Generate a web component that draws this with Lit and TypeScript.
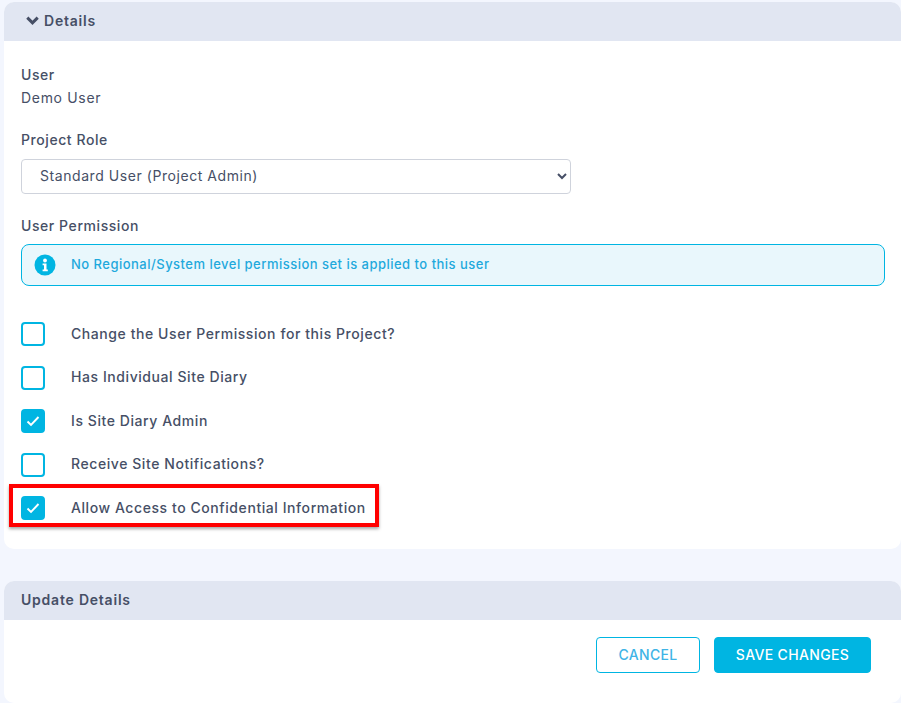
import { LitElement, html, css, svg } from "lit";
import { customElement } from "lit/decorators.js";

const rows = [
  { label: "Change the User Permission for this Project?", checked: false },
  { label: "Has Individual Site Diary", checked: false },
  { label: "Is Site Diary Admin", checked: true },
  { label: "Receive Site Notifications?", checked: false },
  { label: "Allow Access to Confidential Information", checked: true, marked: true },
];

@customElement("app-root")
export class AppRoot extends LitElement {
  static styles = css`
    :host {
      display: block;
      width: 901px;
      height: 703px;
      overflow: hidden;
      background: #f3f6fe;
      font-family: Inter, "Noto Sans", sans-serif;
      font-size: 14px;
      color: #464f66;
      letter-spacing: 0.57px;
    }
    .page { padding: 2px 0 0 4px; display: flex; flex-direction: column; gap: 32px; }
    .card { background: #fff; border-radius: 10px; overflow: hidden; }
    .head {
      height: 39px;
      box-sizing: border-box;
      padding-bottom: 2px;
      background: #e1e6f2;
      display: flex;
      align-items: center;
      padding-left: 17px;
      font-weight: 600;
      font-size: 14px;
      letter-spacing: 0.78px;
      color: #464f66;
    }
    .details .head { padding-left: 22px; gap: 5px; }
    .body { height: 508px; padding: 0 17px; box-sizing: border-box; position: relative; }
    .label { font-weight: 500; line-height: 20px; }
    .user { padding-top: 24px; }
    .value { line-height: 20px; margin-top: 3px; letter-spacing: 0.68px; }
    .role { margin-top: 22px; }
    select {
      display: block;
      width: 550px;
      height: 35px;
      margin-top: 9px;
      padding: 0 14px 2px;
      box-sizing: border-box;
      border: 1px solid #cfd3dc;
      border-radius: 4px;
      background-color: #fff;
      font: inherit;
      letter-spacing: 0.56px;
      color: #464f66;
    }
    .perm { margin-top: 22px; }
    .alert {
      margin-top: 8px;
      width: 864px;
      height: 42px;
      box-sizing: border-box;
      border: 1px solid #00b5e2;
      border-radius: 8px;
      background: #e9f7fc;
      display: flex;
      align-items: center;
      padding: 0 0 2px 12px;
      gap: 15px;
      color: #1fa9dc;
      font-size: 13px;
      font-weight: 500;
      letter-spacing: 0.48px;
    }
    .alert svg { display: block; margin-top: 2px; }
    .checks { margin-top: 36px; display: flex; flex-direction: column; }
    .row { height: 24px; margin-bottom: 19.5px; display: flex; align-items: center; gap: 26px; font-weight: 500; position: relative; }
    .row span:nth-child(2) { position: relative; top: -1px; }
    .box {
      width: 24px;
      height: 24px;
      box-sizing: border-box;
      border: 2px solid #00b5e2;
      border-radius: 4px;
      flex: none;
      display: flex;
      align-items: center;
      justify-content: center;
      background: #fff;
    }
    .box.on { background: #00b5e2; }
    .mark {
      position: absolute;
      left: -12px;
      top: -12px;
      width: 370px;
      height: 43px;
      box-sizing: border-box;
      border: 4px solid #ff0000;
      box-shadow: 0 2px 3px rgba(0,0,0,.35);
      pointer-events: none;
    }
    .update .head { padding-left: 17px; }
    .foot {
      height: 83px;
      box-sizing: border-box;
      padding: 17px 30px 0 0;
      display: flex;
      justify-content: flex-end;
      align-items: flex-start;
      gap: 14px;
    }
    .btn {
      height: 36px;
      box-sizing: border-box;
      padding-bottom: 2px;
      border-radius: 4px;
      display: flex;
      align-items: center;
      justify-content: center;
      font-size: 14px;
      font-weight: 500;
      letter-spacing: 0.35px;
      border: 1px solid #00b5e2;
      font-family: inherit;
    }
    .cancel { width: 104px; background: #fff; color: #3fb4e6; }
    .save { width: 157px; background: #00b5e2; color: #fff; }
  `;

  private check() {
    return html`<svg width="14" height="12" viewBox="0 0 14 12">${svg`<path d="M1.5 6.5 5 10 12.5 2" fill="none" stroke="#fff" stroke-width="1.9"/>`}</svg>`;
  }

  render() {
    return html`<div class="page">
      <section class="card details">
        <div class="head">
          <svg width="13" height="9" viewBox="0 0 13 9"><path d="M1.3 1.6 6.5 6.8 11.7 1.6" fill="none" stroke="#464f66" stroke-width="3"/></svg>
          <span>Details</span>
        </div>
        <div class="body">
          <div class="user label">User</div>
          <div class="value">Demo User</div>
          <div class="role label">Project Role</div>
          <select><option>Standard User (Project Admin)</option></select>
          <div class="perm label">User Permission</div>
          <div class="alert">
            <svg width="22" height="22" viewBox="0 0 22 22">
              <circle cx="11" cy="11" r="10.5" fill="#00b5e2"/>
              <circle cx="11" cy="6.5" r="1.9" fill="#fff"/>
              <path d="M8.6 9.5h3.9v6h1.3v1.8H8.6v-1.8h1.4v-4.2H8.6z" fill="#fff"/>
            </svg>
            <span>No Regional/System level permission set is applied to this user</span>
          </div>
          <div class="checks">
            ${rows.map(
              (r) => html`<div class="row">
                <span class="box ${r.checked ? "on" : ""}">${r.checked ? this.check() : ""}</span>
                <span>${r.label}</span>
                ${r.marked ? html`<span class="mark"></span>` : ""}
              </div>`
            )}
          </div>
        </div>
      </section>
      <section class="card update">
        <div class="head"><span>Update Details</span></div>
        <div class="foot">
          <div class="btn cancel">CANCEL</div>
          <div class="btn save">SAVE CHANGES</div>
        </div>
      </section>
    </div>`;
  }
}
